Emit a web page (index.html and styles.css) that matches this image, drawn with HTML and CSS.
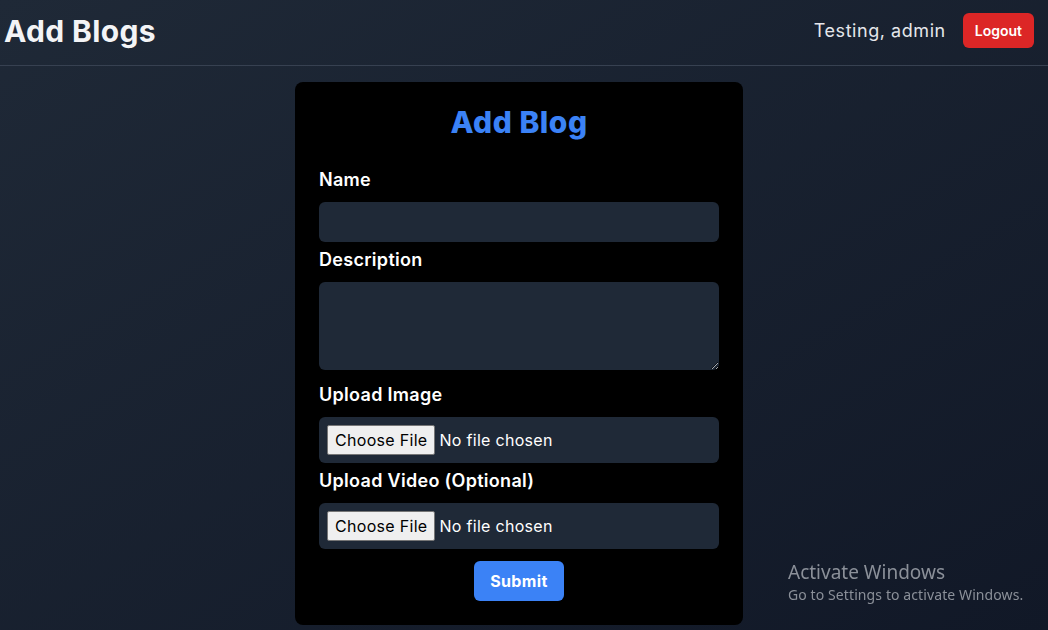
FILE: index.html
```html
<!DOCTYPE html>
<html lang="en">
<head>
<meta charset="utf-8">
<title>Add Blogs</title>
<link rel="stylesheet" href="styles.css">
</head>
<body>
<header class="topbar">
  <h1 class="page-title">Add Blogs</h1>
  <div class="user-area">
    <span class="user-name">Testing, admin</span>
    <button class="logout-btn" type="button">Logout</button>
  </div>
</header>
<main class="main">
  <form class="card">
    <h2 class="card-title">Add Blog</h2>
    <div class="field">
      <label class="label" for="name">Name</label>
      <input class="input" id="name" type="text">
    </div>
    <div class="field">
      <label class="label" for="desc">Description</label>
      <textarea class="textarea" id="desc"></textarea>
    </div>
    <div class="field">
      <label class="label" for="img">Upload Image</label>
      <div class="file-box"><input class="file-input" id="img" type="file"></div>
    </div>
    <div class="field field-last">
      <label class="label" for="vid">Upload Video (Optional)</label>
      <div class="file-box"><input class="file-input" id="vid" type="file"></div>
    </div>
    <div class="actions">
      <button class="submit-btn" type="button">Submit</button>
    </div>
  </form>
</main>
<div class="activate">
  <div class="activate-title">Activate Windows</div>
  <div class="activate-sub">Go to Settings to activate Windows.</div>
</div>
</body>
</html>
```
FILE: styles.css
```css
* { box-sizing: border-box; }
html, body { margin: 0; padding: 0; }
body {
  min-height: 630px;
  height: 630px;
  overflow: hidden;
  background: linear-gradient(to bottom right, #1f2937, #111827);
  font-family: "Inter", "Noto Sans", sans-serif;
  color: #fff;
}
.topbar {
  height: 66px;
  border-bottom: 1px solid #374151;
  display: flex;
  align-items: center;
  justify-content: space-between;
  padding: 0 14px 4px 4px;
}
.page-title {
  margin: 0;
  font-size: 30px;
  line-height: 36px;
  font-weight: 700;
  letter-spacing: 0.35px;
  color: #f3f4f6;
}
.user-area {
  display: flex;
  align-items: center;
  gap: 17px;
}
.user-name {
  font-size: 18px;
  letter-spacing: 0.55px;
  color: #e5e7eb;
}
.logout-btn {
  height: 35px;
  padding: 0 12px;
  border: none;
  border-radius: 6px;
  background: #dc2626;
  color: #fff;
  font: inherit;
  font-size: 14px;
  font-weight: 600;
}
.main {
  padding: 16px 10px 0 0;
}
.card {
  width: 448px;
  margin: 0 auto;
  background: #000;
  border-radius: 8px;
  padding: 22px 24px 24px;
}
.card-title {
  margin: 0 0 26px;
  text-align: center;
  font-size: 30px;
  line-height: 36px;
  font-weight: 800;
  letter-spacing: 0.5px;
  color: #3b82f6;
}
.field { margin-bottom: 4px; }
.field-last { margin-bottom: 12px; }
.label {
  display: block;
  font-size: 18px;
  line-height: 28px;
  font-weight: 600;
  letter-spacing: 0.3px;
  margin-bottom: 8px;
  color: #fff;
}
.input {
  display: block;
  width: 100%;
  height: 40px;
  border: none;
  border-radius: 6px;
  background: #1f2937;
  color: #fff;
  font: inherit;
  padding: 8px;
}
.textarea {
  display: block;
  width: 100%;
  height: 88px;
  border: none;
  border-radius: 6px;
  background: #1f2937;
  color: #fff;
  font: inherit;
  padding: 8px;
  margin-bottom: 11px;
  resize: vertical;
}
.file-box {
  height: 46px;
  border-radius: 6px;
  background: #1f2937;
  padding: 8px;
  display: flex;
  align-items: center;
}
.file-input {
  font-family: inherit;
  font-size: 16px;
  letter-spacing: 0.3px;
  color: #fff;
}
.file-input::file-selector-button {
  font-family: inherit;
  font-size: 16px;
  letter-spacing: 0.3px;
  color: #000;
  background: #efefef;
  border: 1px solid #767676;
  border-radius: 2px;
  padding: 4px 7px;
  margin-right: 4px;
}
.actions {
  display: flex;
  justify-content: center;
}
.submit-btn {
  height: 40px;
  padding: 0 16px;
  border: none;
  border-radius: 6px;
  background: #3b82f6;
  color: #fff;
  font: inherit;
  font-size: 16px;
  font-weight: 700;
  letter-spacing: 0.4px;
}
.activate {
  position: fixed;
  left: 788px;
  top: 559px;
  color: #8b9099;
  font-family: "Noto Sans", "Open Sans", sans-serif;
  pointer-events: none;
}
.activate-title {
  font-size: 19px;
  line-height: 26px;
}
.activate-sub {
  font-size: 14px;
  line-height: 20px;
  letter-spacing: 0.1px;
}
```
